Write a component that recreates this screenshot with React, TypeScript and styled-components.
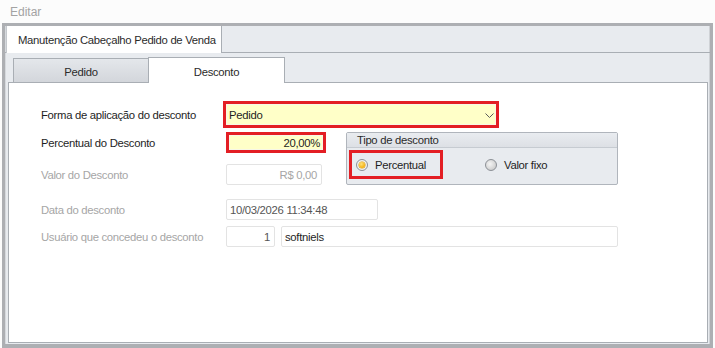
import React from 'react';
import styled, { createGlobalStyle } from 'styled-components';

const Global = createGlobalStyle`
  html, body { margin: 0; padding: 0; background: #fcfcfc; }
  body {
    font-family: "Liberation Sans", Arial, sans-serif;
    font-size: 11.3px;
    letter-spacing: -0.3px;
    color: #222;
  }
  * { box-sizing: border-box; }
`;

const Screen = styled.div`
  width: 715px;
  height: 348px;
  display: flex;
  flex-direction: column;
  overflow: hidden;
`;

const TitleBar = styled.div`
  height: 23px;
  padding: 5px 0 0 10px;
  color: #a3a3a3;
  font-size: 12px;
  line-height: 14px;
  letter-spacing: 0;
`;

const Frame = styled.div`
  margin-left: 2px;
  width: 711px;
  height: 325px;
  border: 3px solid #adafb3;
  border-bottom-width: 4px;
  display: flex;
  flex-direction: column;
  background: #e8ebef;
  box-shadow: inset 1px 0 0 #d6d9dd, inset -1px 0 0 #cfd2d6;
`;

const TopStrip = styled.div`
  height: 27px;
  flex: none;
  display: flex;
  align-items: flex-end;
  padding-left: 1px;
  border-bottom: 1px solid #a9aeb4;
`;

const TopTab = styled.div`
  width: 216px;
  height: 27px;
  margin-bottom: -1px;
  background: #fff;
  border-left: 1px solid #c4c8cd;
  border-right: 1px solid #a9aeb4;
  padding: 2px 0 0 11px;
  line-height: 25px;
  color: #2b2b2b;
`;

const Page = styled.div`
  flex: 1;
  display: flex;
  flex-direction: column;
  padding: 0 2px 1px 3px;
`;

const InnerStrip = styled.div`
  height: 29px;
  flex: none;
  display: flex;
  align-items: flex-end;
  padding-left: 5px;
`;

const InnerTab = styled.div<{ $active?: boolean }>`
  position: relative;
  text-align: center;
  color: #2b2b2b;
  border: 1px solid #a9aeb4;
  border-bottom: none;
  ${(p) =>
    p.$active
      ? `
    width: 137px;
    height: 26px;
    margin-bottom: -1px;
    background: #fff;
    z-index: 1;
    line-height: 24px;
    padding-top: 2px;
  `
      : `
    width: 135px;
    height: 24px;
    border-right: none;
    background: linear-gradient(#e4e7eb, #d3d6db);
    line-height: 22px;
    padding-top: 2px;
  `}
`;

const Panel = styled.div`
  flex: 1;
  background: #fff;
  border: 1px solid #a9aeb4;
  padding: 18px 0 0 32px;
  display: grid;
  grid-template-columns: 182px 123px 272px;
  grid-template-rows: 31px 32px 35px 27px 21px;
  align-content: start;
`;

const Label = styled.div<{ $disabled?: boolean; $h: number }>`
  grid-column: 1;
  height: ${(p) => p.$h}px;
  display: flex;
  align-items: center;
  color: ${(p) => (p.$disabled ? '#a6a6a6' : '#1e1e1e')};
`;

const Combo = styled.div`
  grid-column: 2 / span 2;
  width: 276px;
  height: 27px;
  border: 3px solid #e31e24;
  background: #ffffc8;
  box-shadow: inset 0 0 0 1px #f7f7e6;
  display: flex;
  align-items: center;
  justify-content: space-between;
  padding: 0 2px 0 3px;
  color: #1e1e1e;
`;

const Chevron = styled.svg`
  width: 9px;
  height: 5px;
  margin-top: 1px;
`;

const Field = styled.div<{ $w: number; $align?: 'left' | 'right'; $color?: string }>`
  width: ${(p) => p.$w}px;
  height: 21px;
  border: 1px solid #e3e3e3;
  border-radius: 2px;
  background: #fff;
  display: flex;
  align-items: center;
  justify-content: ${(p) => (p.$align === 'right' ? 'flex-end' : 'flex-start')};
  padding: ${(p) => (p.$align === 'right' ? '0 4px 0 0' : '0 0 0 3px')};
  color: ${(p) => p.$color || '#1e1e1e'};
`;

const Cell = styled.div<{ $span?: boolean }>`
  grid-column: ${(p) => (p.$span ? '2 / span 2' : '2')};
  margin-left: 3px;
  display: flex;
  gap: 6px;
  align-self: start;
`;

const HighlightField = styled.div`
  width: 100px;
  height: 21px;
  border: 3px solid #e31e24;
  background: #ffffc8;
  box-shadow: inset 0 0 0 1px #f7f7e6;
  display: flex;
  align-items: center;
  justify-content: flex-end;
  padding-right: 3px;
  color: #1e1e1e;
`;

const Group = styled.div`
  grid-column: 3;
  grid-row: 2 / span 2;
  height: 53px;
  border: 1px solid #b0b5bc;
  border-radius: 2px;
  background: #e8ebef;
  display: flex;
  flex-direction: column;
  align-self: start;
`;

const GroupHeader = styled.div`
  height: 15px;
  flex: none;
  background: linear-gradient(#e9ecf0, #dde0e5);
  border-bottom: 1px solid #c6cbd1;
  padding-left: 10px;
  line-height: 15px;
  color: #2b2b2b;
`;

const GroupBody = styled.div`
  flex: 1;
  display: flex;
  align-items: flex-start;
  padding: 2px 0 0 2px;
`;

const HighlightBox = styled.div`
  width: 94px;
  height: 29px;
  border: 3px solid #e31e24;
  display: flex;
  align-items: center;
  padding-left: 4px;
`;

const Option = styled.div<{ $offset?: number }>`
  display: flex;
  align-items: center;
  gap: 7px;
  margin-left: ${(p) => p.$offset || 0}px;
  color: #1e1e1e;
`;

const Radio = styled.span<{ $checked?: boolean }>`
  width: 12px;
  height: 12px;
  border-radius: 50%;
  border: 1px solid #8c9096;
  flex: none;
  display: flex;
  align-items: center;
  justify-content: center;
  background: ${(p) =>
    p.$checked
      ? 'radial-gradient(circle, #ffffff 0%, #e9e9e9 100%)'
      : 'radial-gradient(circle at 40% 40%, #f4f4f4 0%, #c4c4c4 95%)'};
  &::after {
    content: '';
    display: ${(p) => (p.$checked ? 'block' : 'none')};
    width: 6px;
    height: 6px;
    border-radius: 50%;
    background: radial-gradient(circle at 40% 35%, #ffe27a 0%, #f2a900 80%);
    box-shadow: 0 0 0 0.5px #d69400;
  }
`;

const OptionRow = styled.div`
  display: flex;
  align-items: center;
`;

export default function App() {
  return (
    <Screen>
      <Global />
      <TitleBar>Editar</TitleBar>
      <Frame>
        <TopStrip>
          <TopTab>Manutenção Cabeçalho Pedido de Venda</TopTab>
        </TopStrip>
        <Page>
          <InnerStrip>
            <InnerTab>Pedido</InnerTab>
            <InnerTab $active>Desconto</InnerTab>
          </InnerStrip>
          <Panel>
            <Label $h={27}>Forma de aplicação do desconto</Label>
            <Combo>
              <span>Pedido</span>
              <Chevron viewBox="0 0 9 5">
                <polyline points="0.5,0.5 4.5,4.5 8.5,0.5" fill="none" stroke="#5a5a5a" strokeWidth="1" />
              </Chevron>
            </Combo>

            <Label $h={21}>Percentual do Desconto</Label>
            <Cell>
              <HighlightField>20,00%</HighlightField>
            </Cell>
            <Group>
              <GroupHeader>Tipo de desconto</GroupHeader>
              <GroupBody>
                <OptionRow>
                  <HighlightBox>
                    <Option>
                      <Radio $checked />
                      <span>Percentual</span>
                    </Option>
                  </HighlightBox>
                  <Option $offset={42}>
                    <Radio />
                    <span>Valor fixo</span>
                  </Option>
                </OptionRow>
              </GroupBody>
            </Group>

            <Label $h={21} $disabled>Valor do Desconto</Label>
            <Cell>
              <Field $w={96} $align="right" $color="#a6a6a6">R$ 0,00</Field>
            </Cell>

            <Label $h={21} $disabled>Data do desconto</Label>
            <Cell $span>
              <Field $w={152} $color="#555">10/03/2026 11:34:48</Field>
            </Cell>

            <Label $h={21} $disabled>Usuário que concedeu o desconto</Label>
            <Cell $span>
              <Field $w={49} $align="right" $color="#555">1</Field>
              <Field $w={337} $color="#1e1e1e">softniels</Field>
            </Cell>
          </Panel>
        </Page>
      </Frame>
    </Screen>
  );
}
